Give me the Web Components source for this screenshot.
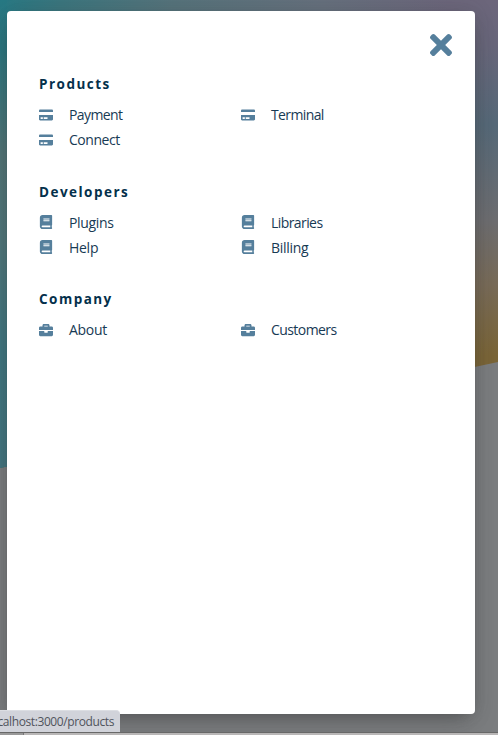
<!DOCTYPE html>
<html lang="en">
<head>
<meta charset="utf-8">
<title>Products</title>
<style>
html,body{margin:0;height:100%;overflow:hidden}
body{font-family:"Open Sans","Noto Sans",sans-serif;color:#173a54}
</style>
</head>
<body>
<menu-page>
  <menu-panel>
    <menu-section heading="Products">
      <menu-link icon="card" style="--fit:-.6px">Payment</menu-link>
      <menu-link icon="card" style="--fit:-.62px">Terminal</menu-link>
      <menu-link icon="card" style="--fit:-.45px">Connect</menu-link>
    </menu-section>
    <menu-section heading="Developers">
      <menu-link icon="book" style="--fit:-.32px">Plugins</menu-link>
      <menu-link icon="book" style="--fit:-.58px">Libraries</menu-link>
      <menu-link icon="book" style="--fit:-.28px">Help</menu-link>
      <menu-link icon="book" style="--fit:-.28px">Billing</menu-link>
    </menu-section>
    <menu-section heading="Company">
      <menu-link icon="case" style="--fit:-.28px">About</menu-link>
      <menu-link icon="case" style="--fit:-.57px">Customers</menu-link>
    </menu-section>
  </menu-panel>
  <url-status slot="status">calhost:3000/products</url-status>
</menu-page>
<script>
const icons = {
  card: ['0 0 576 512','M0 432c0 26.5 21.5 48 48 48h480c26.5 0 48-21.5 48-48V256H0v176zm192-68c0-6.6 5.4-12 12-12h136c6.6 0 12 5.4 12 12v40c0 6.6-5.4 12-12 12H204c-6.6 0-12-5.4-12-12v-40zm-128 0c0-6.6 5.4-12 12-12h72c6.6 0 12 5.4 12 12v40c0 6.6-5.4 12-12 12H76c-6.6 0-12-5.4-12-12v-40zM576 80v48H0V80c0-26.5 21.5-48 48-48h480c26.5 0 48 21.5 48 48z'],
  book: ['0 0 448 512','M448 360V24c0-13.3-10.7-24-24-24H96C43 0 0 43 0 96v320c0 53 43 96 96 96h328c13.3 0 24-10.7 24-24v-16c0-7.5-3.5-14.3-8.9-18.7-4.2-15.4-4.2-59.3 0-74.7 5.4-4.3 8.9-11.1 8.9-18.6zM128 134c0-3.3 2.7-6 6-6h212c3.3 0 6 2.7 6 6v20c0 3.3-2.7 6-6 6H134c-3.3 0-6-2.7-6-6v-20zm0 64c0-3.3 2.7-6 6-6h212c3.3 0 6 2.7 6 6v20c0 3.3-2.7 6-6 6H134c-3.3 0-6-2.7-6-6v-20zm253.4 250H96c-17.7 0-32-14.3-32-32 0-17.6 14.4-32 32-32h285.4c-1.9 17.1-1.9 46.9 0 64z'],
  case: ['0 0 512 512','M320 336c0 8.84-7.16 16-16 16h-96c-8.84 0-16-7.16-16-16v-48H0v144c0 25.6 22.4 48 48 48h416c25.6 0 48-22.4 48-48V288H320v48zm144-208h-80V80c0-25.6-22.4-48-48-48H176c-25.6 0-48 22.4-48 48v48H48c-25.6 0-48 22.4-48 48v80h512v-80c0-25.6-22.4-48-48-48zm-144 0H192V96h128v32z'],
  close: ['0 0 352 512','M242.72 256l100.07-100.07c12.28-12.28 12.28-32.19 0-44.48l-22.24-22.24c-12.28-12.28-32.19-12.28-44.48 0L176 189.28 75.93 89.21c-12.28-12.28-32.19-12.28-44.48 0L9.21 111.45c-12.28 12.28-12.28 32.19 0 44.48L109.28 256 9.21 356.07c-12.28 12.28-12.28 32.19 0 44.48l22.24 22.24c12.28 12.28 32.2 12.28 44.48 0L176 322.72l100.07 100.07c12.28 12.28 32.2 12.28 44.48 0l22.24-22.24c12.28-12.28 12.28-32.19 0-44.48L242.72 256z']
};
const define = (name, render) => customElements.define(name, class extends HTMLElement {
  connectedCallback() {
    if (!this.shadowRoot) this.attachShadow({mode: 'open'}).innerHTML = render(this);
  }
});
define('menu-icon', el => {
  const [box, path] = icons[el.getAttribute('name')];
  return `<style>:host{display:block;color:#557f9c}svg{display:block;width:100%;height:100%}</style>
  <svg viewBox="${box}" fill="currentColor" aria-hidden="true"><path d="${path}"/></svg>`;
});
define('menu-link', el => `<style>
  :host{display:grid;grid-template-columns:14px 1fr;column-gap:16px;align-items:center;height:25px;font-size:14px;line-height:25px;letter-spacing:var(--fit,0);font-weight:400;white-space:nowrap}
  menu-icon{width:14px;height:14px}
  span{padding-top:1px;line-height:24px}
  </style><menu-icon name="${el.getAttribute('icon')}"></menu-icon><span><slot></slot></span>`);
define('menu-section', el => `<style>
  :host{display:block}
  h2{margin:0 0 8px;font-size:13.5px;line-height:20px;font-weight:700;letter-spacing:1.47px;color:#04304b}
  div{display:grid;grid-template-columns:202px 202px}
  </style><h2>${el.getAttribute('heading')}</h2><div><slot></slot></div>`);
define('menu-panel', () => `<style>
  :host{display:block;box-sizing:border-box;width:468px;height:703px;padding:18px 18px 0 32px;background:#fff;border-radius:4px;box-shadow:0 13px 27px -5px rgba(50,50,50,.2),0 8px 16px -8px rgba(0,0,0,.25),0 0 20px rgba(60,60,60,.16)}
  header{display:flex;justify-content:flex-end;height:45px}
  button{padding:0;border:0;background:none;width:32px;height:32px}
  menu-icon{width:32px;height:32px}
  main{display:grid;row-gap:29.5px}
  </style><header><button aria-label="Close"><menu-icon name="close"></menu-icon></button></header><main><slot></slot></main>`);
define('url-status', () => `<style>
  :host{display:block;position:absolute;left:0;bottom:3px;width:120px;height:22px;box-sizing:border-box;overflow:hidden;background:#d1d3da;border-top:1px solid #dcdee3;border-radius:0 4px 0 0;color:#50545c;font-size:12px;line-height:22px;letter-spacing:-.4px}
  span{display:block;white-space:nowrap;float:right;margin-right:6px}
  </style><span><slot></slot></span>`);
define('menu-page', () => `<style>
  :host{display:block;position:relative;box-sizing:border-box;width:498px;height:735px;padding:11px 0 0 7px;overflow:hidden;isolation:isolate;background:#7b7d7f}
  .hero,.edge{position:absolute;inset:0;z-index:-1;clip-path:polygon(0 0,100% 0,100% 362px,0 468px)}
  .hero{background:linear-gradient(90deg,#277984 0,#3b767e 12%,#56737b 35%,#66707d 65%,transparent 90%),linear-gradient(#6c667b 0,#68667a 45px,#566978 125px,#6d6d70 220px,#786b58 285px,#7a6538 355px)}
  .edge{right:auto;width:7px;clip-path:polygon(0 0,100% 0,100% 466.5px,0 468px);background:linear-gradient(#277984 0,#2b7780 50px,#527577 155px,#50777b 240px,#3f7781 350px,#437680 468px)}
  footer{position:absolute;inset:auto 0 0;height:3px;box-sizing:border-box;border-top:1px solid #686868;background:#b9b7b7}
  footer i{display:block;width:23px;height:2px;background:#999;border-right:1px solid #777}
  </style><div class="hero"></div><div class="edge"></div><slot></slot><footer><i></i></footer><slot name="status"></slot>`);
</script>
</body>
</html>
